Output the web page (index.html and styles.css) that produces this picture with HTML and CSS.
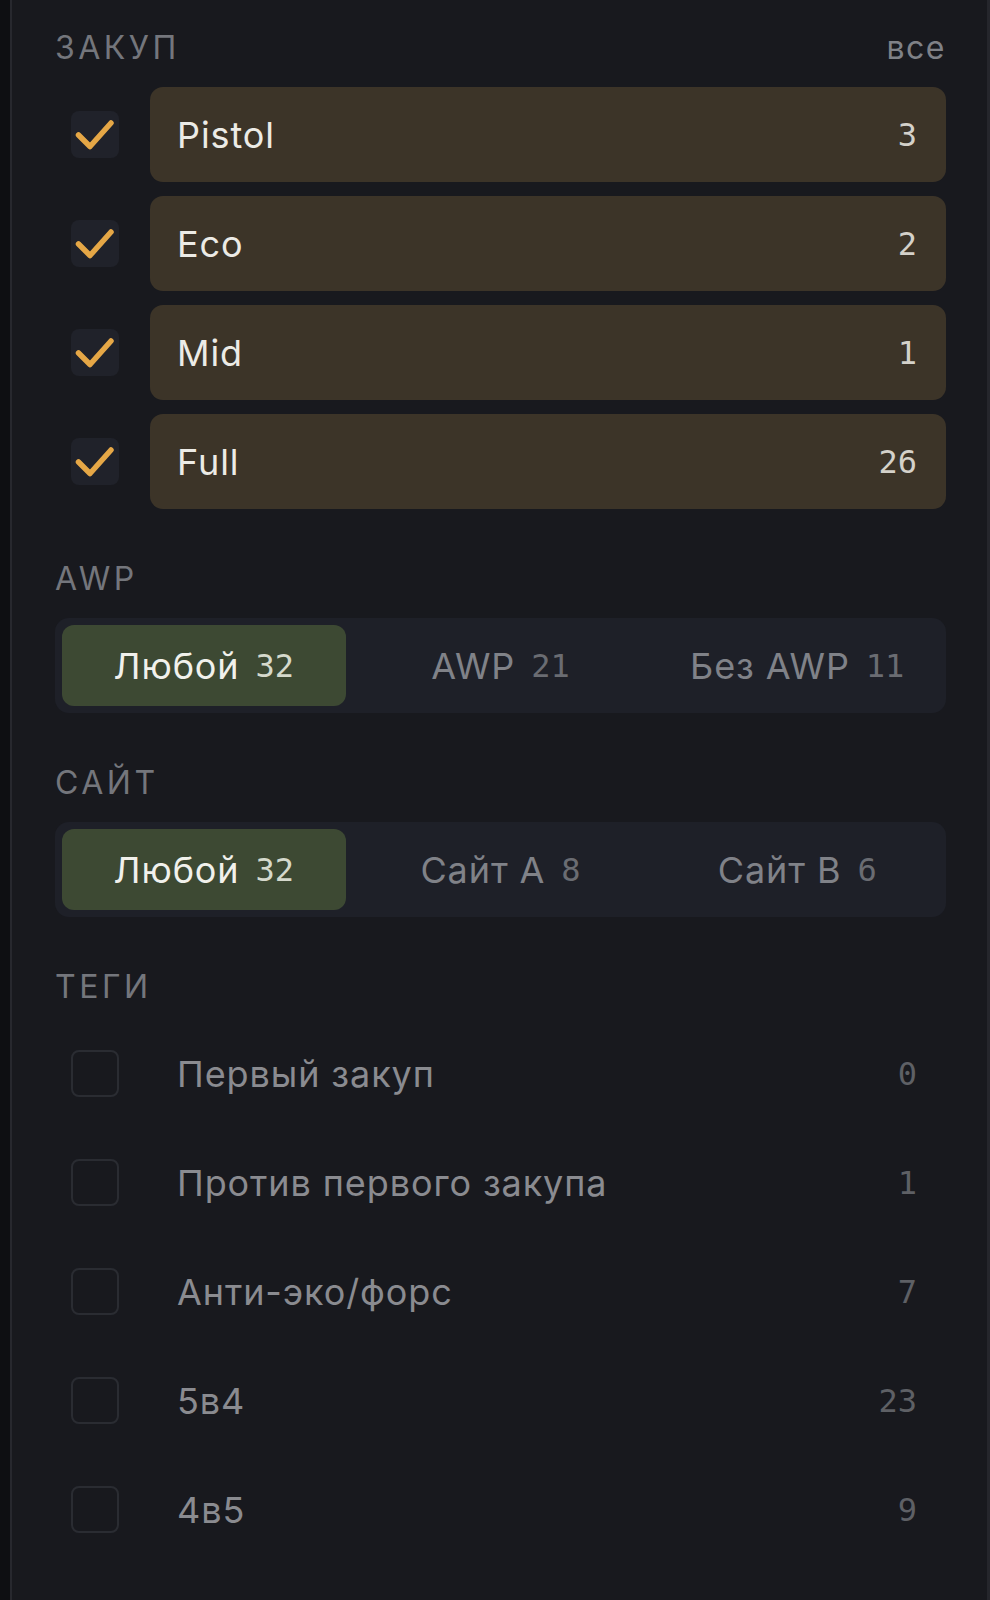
FILE: index.html
```html
<!DOCTYPE html>
<html>
<head>
    <meta charset="UTF-8">
    <title>Фильтры раундов</title>
    <link rel="stylesheet" href="styles.css">
</head>
<body>

<div class="sidebar">

    <div class="section">
        <div class="section-head">
            <h2>Закуп</h2>
            <span class="all">все</span>
        </div>
        <ul class="items">
            <li class="item on">
                <span class="check"><svg viewBox="0 0 48 47"><path d="M7.5 24 L19 35.5 L40 12"/></svg></span>
                <span class="label">Pistol</span><span class="count">3</span>
            </li>
            <li class="item on">
                <span class="check"><svg viewBox="0 0 48 47"><path d="M7.5 24 L19 35.5 L40 12"/></svg></span>
                <span class="label">Eco</span><span class="count">2</span>
            </li>
            <li class="item on">
                <span class="check"><svg viewBox="0 0 48 47"><path d="M7.5 24 L19 35.5 L40 12"/></svg></span>
                <span class="label">Mid</span><span class="count">1</span>
            </li>
            <li class="item on">
                <span class="check"><svg viewBox="0 0 48 47"><path d="M7.5 24 L19 35.5 L40 12"/></svg></span>
                <span class="label">Full</span><span class="count">26</span>
            </li>
        </ul>
    </div>

    <div class="section">
        <div class="section-head"><h2>AWP</h2></div>
        <div class="segments">
            <div class="seg active"><span class="seg-label">Любой</span><span class="seg-count">32</span></div>
            <div class="seg"><span class="seg-label">AWP</span><span class="seg-count">21</span></div>
            <div class="seg"><span class="seg-label">Без AWP</span><span class="seg-count">11</span></div>
        </div>
    </div>

    <div class="section">
        <div class="section-head"><h2>Сайт</h2></div>
        <div class="segments">
            <div class="seg active"><span class="seg-label">Любой</span><span class="seg-count">32</span></div>
            <div class="seg"><span class="seg-label">Сайт A</span><span class="seg-count">8</span></div>
            <div class="seg"><span class="seg-label">Сайт B</span><span class="seg-count">6</span></div>
        </div>
    </div>

    <div class="section">
        <div class="section-head"><h2>Теги</h2></div>
        <ul class="items">
            <li class="item">
                <span class="check"></span>
                <span class="label">Первый закуп</span><span class="count">0</span>
            </li>
            <li class="item">
                <span class="check"></span>
                <span class="label">Против первого закупа</span><span class="count">1</span>
            </li>
            <li class="item">
                <span class="check"></span>
                <span class="label">Анти-эко/форс</span><span class="count">7</span>
            </li>
            <li class="item">
                <span class="check"></span>
                <span class="label">5в4</span><span class="count">23</span>
            </li>
            <li class="item">
                <span class="check"></span>
                <span class="label">4в5</span><span class="count">9</span>
            </li>
        </ul>
    </div>

</div>

</body>
</html>
```

FILE: styles.css
```css
html {
    box-sizing: border-box;
}
*, *:before, *:after {
    box-sizing: inherit;
}

body{
    margin: 0;
    background-color: #0e0f12;
    font-family: Inter, "Noto Sans", sans-serif;
}

.sidebar{
    margin-left: 10px;
    min-height: 1600px;
    background-color: #18191e;
    border-left: 2px solid #27282e;
    border-right: 3px solid #25262c;
    padding: 32px 41px 0 43px;
}

.section{
    margin-bottom: 54px;
}

.section-head{
    display: flex;
    justify-content: space-between;
    align-items: center;
    height: 32px;
    margin-bottom: 23px;
}

.section-head h2{
    margin: 0;
    font-size: 32px;
    line-height: 1;
    font-weight: 400;
    letter-spacing: 3.5px;
    text-transform: uppercase;
    color: #74767c;
}

.all{
    font-size: 32px;
    line-height: 1;
    letter-spacing: 1.5px;
    color: #7f8187;
}

/* checkbox rows */

.items{
    list-style: none;
    margin: 0;
    padding: 0;
    display: flex;
    flex-direction: column;
    gap: 14px;
}

.item{
    display: flex;
    align-items: center;
    height: 95px;
}

.check{
    flex: none;
    width: 48px;
    height: 47px;
    margin-left: 16px;
    margin-right: 31px;
    border-radius: 8px;
    border: 2px solid #2a2c32;
}

.item.on .check{
    border: none;
    background-color: #20222a;
}

.check svg{
    display: block;
    width: 48px;
    height: 47px;
}

.check path{
    fill: none;
    stroke: #e5a746;
    stroke-width: 5.5;
    stroke-linecap: round;
    stroke-linejoin: round;
}

.label{
    flex: 1;
    display: flex;
    align-items: center;
    align-self: stretch;
    padding-left: 27px;
    font-size: 36px;
    line-height: 1;
    letter-spacing: 0.9px;
    color: #8a8b90;
    border-radius: 13px 0 0 13px;
}

.count{
    align-self: stretch;
    display: flex;
    align-items: center;
    padding-right: 29px;
    font-family: "DejaVu Sans Mono", monospace;
    font-size: 32px;
    line-height: 1;
    color: #5e6065;
    border-radius: 0 13px 13px 0;
}

.item.on .label{
    background-color: #3c3428;
    color: #ecebe6;
}

.item.on .count{
    background-color: #3c3428;
    color: #d4d1ca;
}

/* segmented control */

.segments{
    display: flex;
    gap: 13px;
    height: 95px;
    padding: 7px;
    border-radius: 14px;
    background-color: #1e2028;
}

.seg{
    flex: 1;
    display: flex;
    justify-content: center;
    align-items: center;
    gap: 16px;
    border-radius: 12px;
}

.seg.active{
    background-color: #3d4933;
}

.seg-label{
    font-size: 36px;
    line-height: 1;
    letter-spacing: 0.9px;
    color: #808288;
}

.seg-count{
    font-family: "DejaVu Sans Mono", monospace;
    font-size: 32px;
    line-height: 1;
    color: #6a6c72;
}

.seg.active .seg-label{
    color: #f1f1ec;
}

.seg.active .seg-count{
    color: #d5d9cc;
}
```
